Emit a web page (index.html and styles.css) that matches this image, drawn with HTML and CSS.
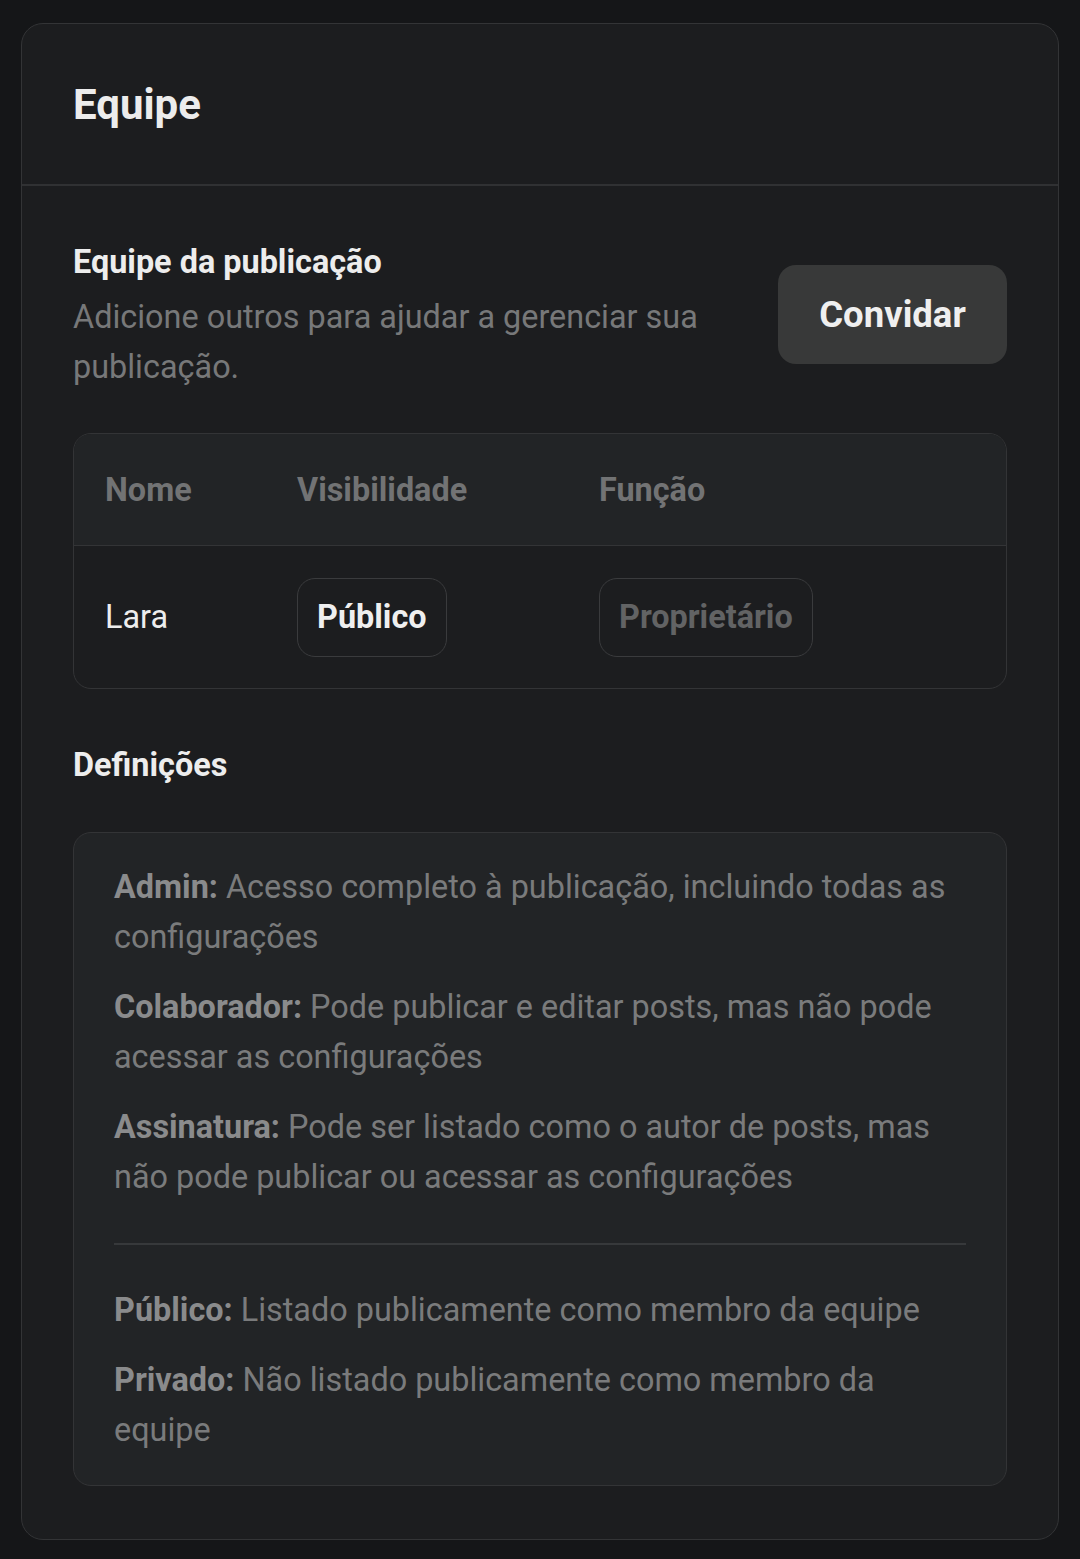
FILE: index.html
```html
<!DOCTYPE html>
<html lang="pt-BR">
<head>
    <meta charset="UTF-8">
    <meta name="viewport" content="width=device-width, initial-scale=1.0">
    <title>Equipe</title>
    <link rel="stylesheet" href="styles.css">
</head>
<body>

    <div class="card">
        <header class="card-header">
            <h1>Equipe</h1>
        </header>

        <div class="card-body">
            <div class="team-intro">
                <div class="team-text">
                    <h2>Equipe da publicação</h2>
                    <p>Adicione outros para ajudar a gerenciar sua publicação.</p>
                </div>
                <button class="invite-btn">Convidar</button>
            </div>

            <div class="team-table">
                <div class="table-row table-head">
                    <div>Nome</div>
                    <div>Visibilidade</div>
                    <div>Função</div>
                </div>
                <div class="table-row">
                    <div class="member-name">Lara</div>
                    <div><span class="pill">Público</span></div>
                    <div><span class="pill pill-muted">Proprietário</span></div>
                </div>
            </div>

            <h2 class="defs-title">Definições</h2>

            <div class="defs-box">
                <p><strong>Admin:</strong> Acesso completo à publicação, incluindo todas as configurações</p>
                <p><strong>Colaborador:</strong> Pode publicar e editar posts, mas não pode acessar as configurações</p>
                <p><strong>Assinatura:</strong> Pode ser listado como o autor de posts, mas não pode publicar ou acessar as configurações</p>
                <hr>
                <p><strong>Público:</strong> Listado publicamente como membro da equipe</p>
                <p><strong>Privado:</strong> Não listado publicamente como membro da equipe</p>
            </div>
        </div>
    </div>

</body>
</html>
```

FILE: styles.css
```css
body {
    font-family: Roboto, 'Noto Sans', sans-serif;
    margin: 0;
    padding: 23px 21px 22px;
    background-color: #151618;
    color: #ededed;
}

.card {
    background-color: #1c1d1f;
    border: 1px solid #333436;
    border-radius: 22px;
}

.card-header {
    height: 160px;
    padding: 0 51px;
    display: flex;
    align-items: center;
    border-bottom: 2px solid #303133;
}

.card-header h1 {
    margin: 0;
    font-size: 42px;
    font-weight: 700;
    color: #ececec;
}

.card-body {
    padding: 51px 51px 53px;
}

.team-intro {
    display: flex;
    align-items: center;
    justify-content: space-between;
    gap: 40px;
}

.team-text h2 {
    margin: 0 0 5px;
    font-size: 32.4px;
    line-height: 50px;
    font-weight: 700;
    color: #ededed;
}

.team-text p {
    margin: 0;
    font-size: 32.4px;
    line-height: 50px;
    color: #777879;
    max-width: 660px;
}

.invite-btn {
    background-color: #383939;
    color: #efefef;
    border: none;
    border-radius: 18px;
    width: 229px;
    height: 99px;
    font-family: inherit;
    font-size: 36.5px;
    font-weight: 700;
    flex-shrink: 0;
}

.team-table {
    margin-top: 41px;
    border: 1px solid #333436;
    border-radius: 18px;
    overflow: hidden;
}

.table-row {
    display: grid;
    grid-template-columns: 192px 302px 1fr;
    align-items: center;
    padding: 0 31px;
    height: 142px;
    font-size: 32.4px;
}

.table-head {
    height: 111px;
    background-color: #222426;
    border-bottom: 1px solid #333436;
    font-weight: 700;
    color: #727374;
}

.member-name {
    color: #ededed;
}

.pill {
    display: inline-block;
    padding: 0 19px;
    line-height: 77px;
    border: 1px solid #3a3b3d;
    border-radius: 18px;
    font-weight: 700;
    color: #efefef;
}

.pill-muted {
    color: #626364;
}

.defs-title {
    margin: 51px 0 42px;
    font-size: 32.4px;
    line-height: 50px;
    font-weight: 700;
    color: #ededed;
}

.defs-box {
    background-color: #222426;
    border: 1px solid #333436;
    border-radius: 18px;
    padding: 29px 40px 30px;
}

.defs-box p {
    margin: 0 0 20px;
    font-size: 32.4px;
    line-height: 50px;
    color: #7a7b7c;
}

.defs-box p:last-child {
    margin-bottom: 0;
}

.defs-box strong {
    color: #8a8b8c;
}

.defs-box hr {
    border: none;
    border-top: 2px solid #37393b;
    margin: 41px 0 40px;
}
```
